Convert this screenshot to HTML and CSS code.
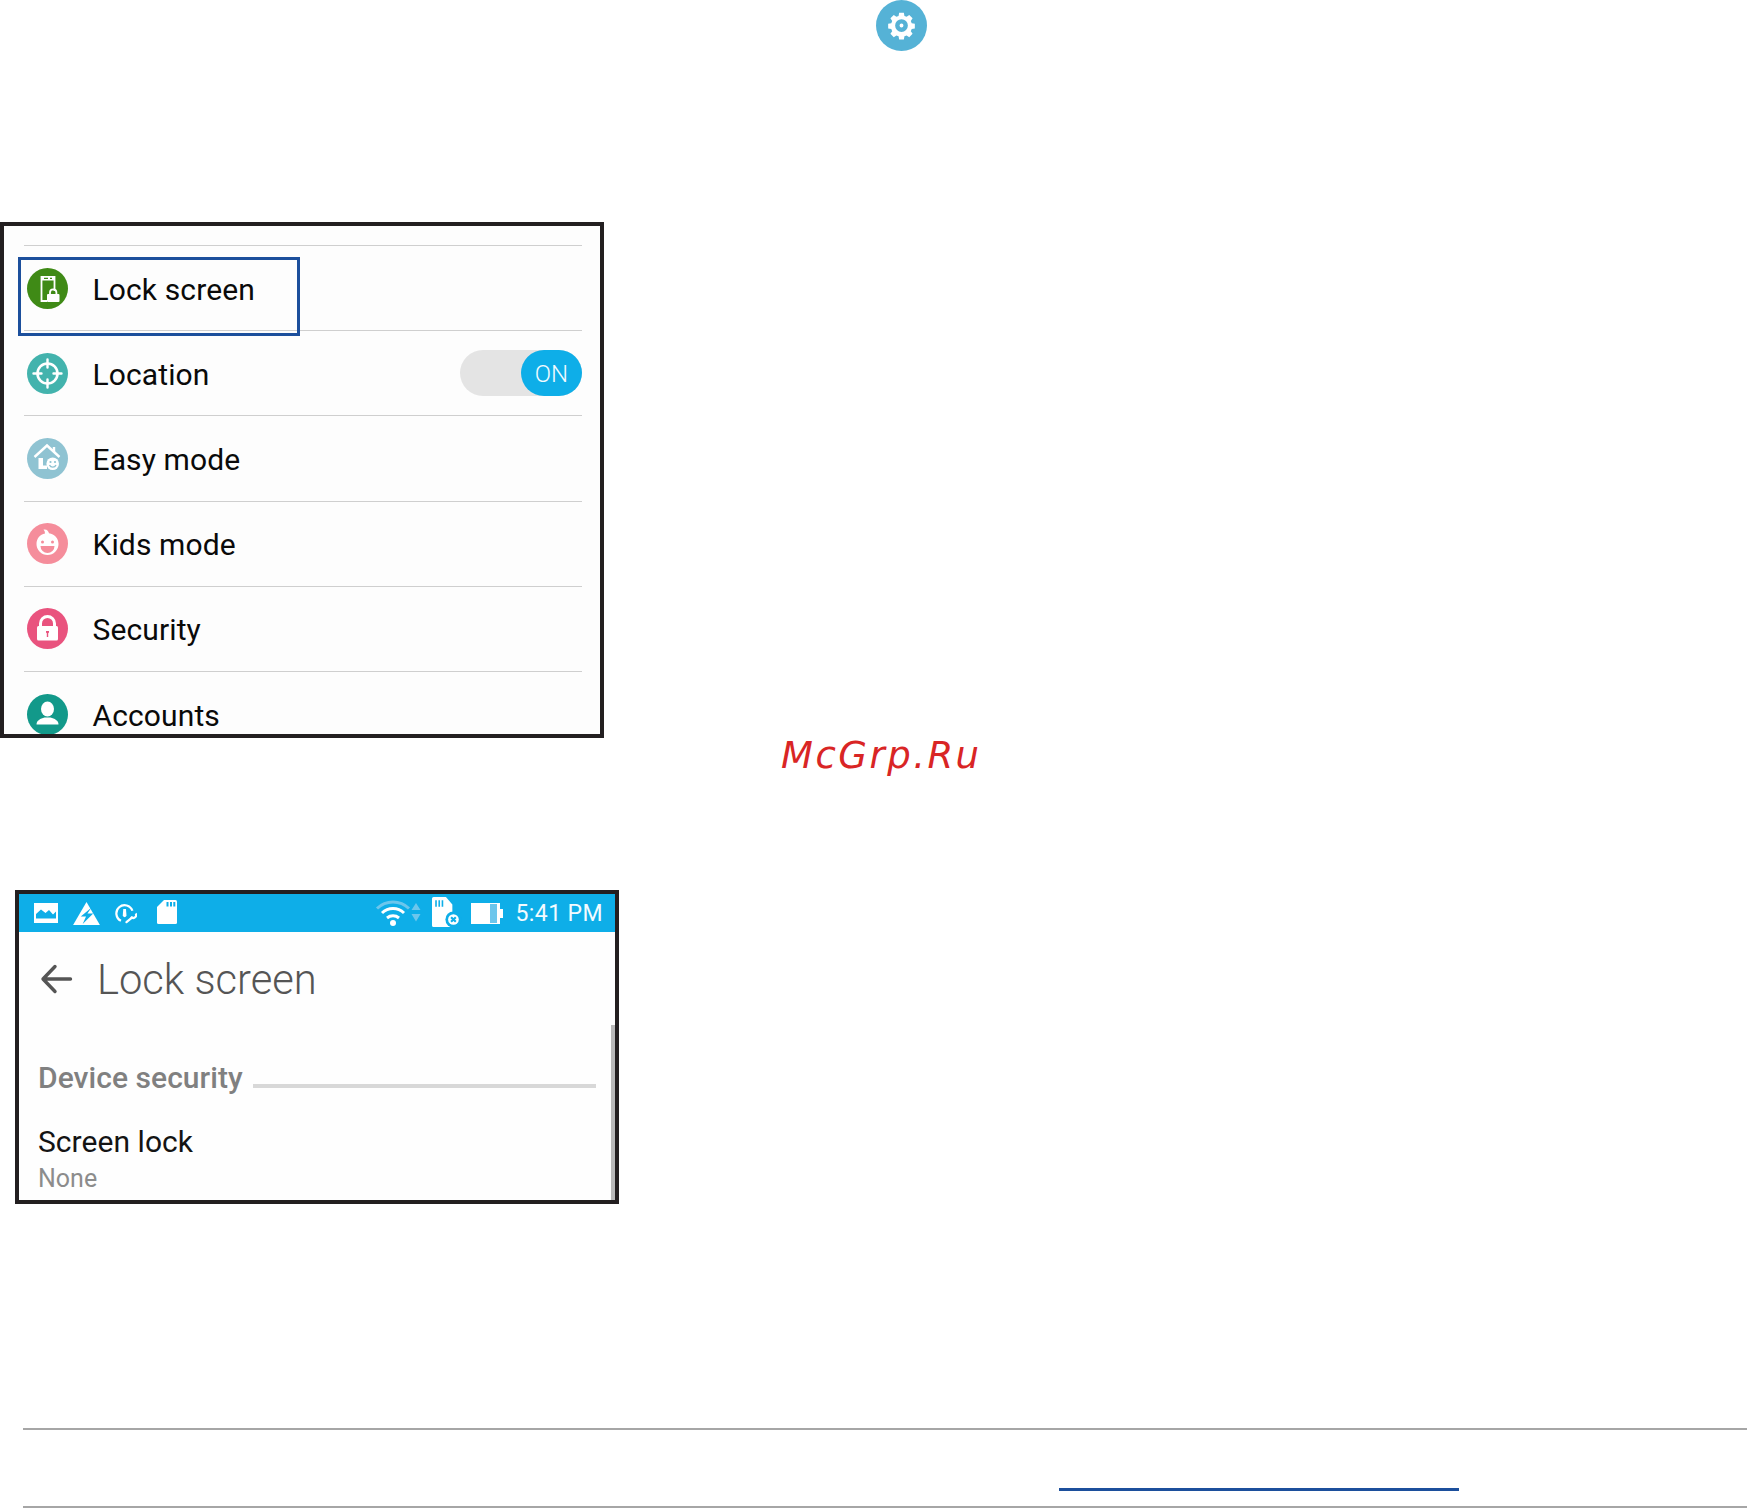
FILE: index.html
```html
<!DOCTYPE html>
<html lang="en">
<head>
<meta charset="utf-8">
<title>Lock screen settings</title>
<link rel="stylesheet" href="styles.css">
</head>
<body>
<main class="page">
  <div class="gear-wrap">
    <svg class="gear" viewBox="0 0 52 52"><circle cx="26" cy="26" r="26" fill="#55b2d6"/><path fill="#fff" fill-rule="evenodd" d="M23.6 13h4.8l.6 3.2 2.2.9 2.7-1.8 3.4 3.4-1.8 2.7.9 2.2 3.2.6v4.800l-3.2.6-.9 2.2 1.8 2.7-3.4 3.4-2.7-1.8-2.2.9-.6 3.2h-4.800l-.6-3.2-2.2-.9-2.7 1.8-3.4-3.4 1.8-2.7-.9-2.2-3.2-.6v-4.800l3.2-.6.9-2.2-1.8-2.7 3.4-3.4 2.7 1.8 2.2-.9zM26 19.500a6.500 6.500 0 1 0 0 13 6.500 6.500 0 0 0 0-13zM26 24a2 2 0 1 1 0 4 2 2 0 0 1 0-4z"/></svg>
  </div>

  <section class="shot shot-menu">
    <div class="highlight"></div>
    <div class="menu">
      <div class="row">
        <svg class="icon" viewBox="0 0 41 41"><circle cx="20.500" cy="20.500" r="20.500" fill="#3f8a16"/><path fill="none" stroke="#fff" stroke-width="1.800" d="M20 33H14.500V9h13v14"/><path fill="#fff" d="M14 8.500h14v4H14z"/><path fill="#3f8a16" d="M17 9.800h4v1.200h-4zM23 9.800h2v1.200h-2z"/><path fill="none" stroke="#fff" stroke-width="1.800" d="M23 26.500v-2a3.200 3.200 0 0 1 6.400 0v2"/><rect x="20" y="26" width="12.500" height="8" rx="1" fill="#fff"/></svg>
        <span class="label">Lock screen</span>
      </div>
      <div class="row">
        <svg class="icon" viewBox="0 0 41 41"><circle cx="20.500" cy="20.500" r="20.500" fill="#43b3ad"/><circle cx="20.500" cy="20.500" r="10" fill="none" stroke="#fff" stroke-width="2.600"/><path stroke="#fff" stroke-width="2.400" stroke-linecap="round" d="M20.500 6.500v8M20.500 26.500v8M6.500 20.500h8M26.500 20.500h8"/></svg>
        <span class="label">Location</span>
        <div class="toggle"><span class="knob">ON</span></div>
      </div>
      <div class="row">
        <svg class="icon" viewBox="0 0 41 41"><circle cx="20.500" cy="20.500" r="20.500" fill="#8fc3d2"/><path fill="none" stroke="#fff" stroke-width="2.400" d="M7.500 19 20 7.500 32.500 19"/><path fill="none" stroke="#fff" stroke-width="2.400" d="M27 9v5"/><path fill="#fff" d="M11.500 20h4.500v7.500h4V31h-8.500z"/><circle cx="25.700" cy="25.700" r="6.300" fill="#fff"/><circle cx="23.500" cy="24" r="1.100" fill="#8fc3d2"/><circle cx="28" cy="24" r="1.100" fill="#8fc3d2"/><path fill="none" stroke="#8fc3d2" stroke-width="1.300" d="M22.500 27a3.500 3.500 0 0 0 6.500 0"/></svg>
        <span class="label">Easy mode</span>
      </div>
      <div class="row">
        <svg class="icon" viewBox="0 0 41 41"><circle cx="20.500" cy="20.500" r="20.500" fill="#f58d9b"/><path fill="#fff" d="M17.500 6.500c3 0 4 2 4.500 3.800 5.500.8 9.500 5 9.500 10.700a11 11 0 0 1-22 0c0-5.500 3.500-9.800 8.500-10.600 0-1.400-.5-2.700-1.500-3.900z"/><circle cx="15.500" cy="19" r="1.500" fill="#f58d9b"/><circle cx="25.500" cy="19" r="1.500" fill="#f58d9b"/><path fill="#f58d9b" d="M13.500 23h14a7 7 0 0 1-14 0z"/></svg>
        <span class="label">Kids mode</span>
      </div>
      <div class="row">
        <svg class="icon" viewBox="0 0 41 41"><circle cx="20.500" cy="20.500" r="20.500" fill="#e9537e"/><path fill="none" stroke="#fff" stroke-width="3" d="M13.500 19v-3.500a7 7 0 0 1 14 0V19"/><rect x="10" y="18" width="21" height="14.500" rx="1.500" fill="#fff"/><path fill="#e9537e" d="M19 23h3v1.500l-.8.800V29h-1.400v-3.700l-.8-.800z"/></svg>
        <span class="label">Security</span>
      </div>
      <div class="row">
        <svg class="icon" viewBox="0 0 41 41"><circle cx="20.500" cy="20.500" r="20.500" fill="#12998a"/><ellipse cx="20.500" cy="15" rx="6.500" ry="7.500" fill="#fff"/><path fill="#fff" d="M9.500 30.500c0-4 4-6 8-7h6c4 1 8 3 8 7z"/></svg>
        <span class="label">Accounts</span>
      </div>
    </div>
  </section>

  <div class="watermark">McGrp.Ru</div>

  <section class="shot shot-lock">
    <div class="statusbar">
      <div class="tray">
        <svg class="si si-img" viewBox="0 0 24 20"><path fill="#fff" fill-rule="evenodd" d="M0 0h24v20H0zM2 15.500h20v-7l-3 3-4-4.500-3.500 3L7 6.500l-5 4.500z"/></svg>
        <svg class="si si-warn" viewBox="0 0 28 24"><path fill="#fff" d="M14 0l14 24H0z"/><path fill="#0eaee8" d="M19 6 8 15h5.500L10 23l11-11h-6z"/></svg>
        <svg class="si si-gauge" viewBox="0 0 24 22"><path fill="none" stroke="#fff" stroke-width="2.400" d="M6.500 19A9 9 0 1 1 19 8"/><path fill="#fff" d="M9 6h3l.5 7a2 2 0 0 1-4 0z"/><path fill="none" stroke="#fff" stroke-width="2.400" stroke-linecap="round" d="M12.500 20.500l6-5"/><path fill="none" stroke="#fff" stroke-width="2.400" d="M22.500 11a3 3 0 0 1-5 3.500"/></svg>
        <svg class="si si-sd" viewBox="0 0 20 24"><path fill="#fff" d="M7 0h11.500a1.500 1.500 0 0 1 1.500 1.500v21a1.500 1.500 0 0 1-1.500 1.500h-17A1.500 1.500 0 0 1 0 22.500V7z"/><path fill="#0eaee8" d="M9.500 2h2v4.500h-2zM13 2h2v4.500h-2zM16.300 2h2v4.500h-2z"/></svg>
      </div>
      <div class="tray tray-right">
        <svg class="si si-wifi" viewBox="0 0 46 28"><path fill="none" stroke="#6cc6ec" stroke-width="3" d="M2 10.500a23 23 0 0 1 32 0"/><path fill="none" stroke="#fff" stroke-width="3" d="M7 15a16 16 0 0 1 22 0M12 20a9.500 9.500 0 0 1 12 0"/><circle cx="18" cy="25" r="3" fill="#fff"/><path fill="#6cc6ec" d="M41 5l4.500 7h-9zM36.500 16h9L41 23.500z"/></svg>
        <svg class="si si-sdx" viewBox="0 0 28 28"><path fill="#fff" d="M1.500 0H13l6 7v9h-8v12H1.500A1.500 1.500 0 0 1 0 26.500v-25A1.500 1.500 0 0 1 1.500 0z"/><path fill="#0eaee8" d="M3 3h1.500v6H3zM6 3h1.500v6H6zM9 3h1.500v6H9z"/><path fill="#fff" d="M10 14h9v14h-9z"/><circle cx="20" cy="21" r="7.500" fill="#0eaee8"/><circle cx="20" cy="21" r="5" fill="#fff"/><path stroke="#0eaee8" stroke-width="2" d="M17.800 18.800l4.400 4.400M22.200 18.800l-4.400 4.400"/></svg>
        <svg class="si si-batt" viewBox="0 0 32 21"><path fill="#fff" d="M0 0h29v21H0zM29 6h3v9h-3z"/><path fill="#6cc6ec" d="M19 1h7v19h-7z"/></svg>
        <span class="time">5:41 PM</span>
      </div>
    </div>
    <div class="titlebar">
      <svg class="back" viewBox="0 0 32 30"><path fill="none" stroke="#555" stroke-width="3.400" stroke-linecap="round" stroke-linejoin="round" d="M30 15H3M14.500 2.500 2.500 15l12 12.500"/></svg>
      <span class="title">Lock screen</span>
    </div>
    <div class="group">
      <span class="group-name">Device security</span>
      <span class="group-line"></span>
    </div>
    <div class="pref-name">Screen lock</div>
    <div class="pref-value">None</div>
    <div class="scrollbar"></div>
  </section>

  <footer class="foot">
    <div class="foot-top"></div>
    <div class="foot-link"></div>
    <div class="foot-bottom"></div>
  </footer>
</main>
</body>
</html>
```

FILE: styles.css
```css
* { box-sizing: border-box; }
html, body { margin: 0; padding: 0; background: #fff; }
body { width: 1747px; height: 1508px; overflow: hidden; font-family: Roboto, "Liberation Sans", sans-serif; }
.page { display: flex; flex-direction: column; height: 1508px; }

.gear-wrap { height: 222px; padding-left: 876px; }
.gear { display: block; width: 51px; height: 51px; }

.shot { position: relative; background: #fdfdfd; border: 4px solid #231f20; overflow: hidden; }
.shot-menu { width: 604px; height: 516px; padding: 19px 18px 0 20px; }

.highlight { position: absolute; left: 14px; top: 31px; width: 282px; height: 79px; border: 3px solid #1c4f9c; z-index: 1; }

.row { display: flex; align-items: center; height: 85.2px; border-top: 1.5px solid #cfcfcf; padding-left: 3px; }
.icon { display: block; width: 41px; height: 41px; flex: none; margin-right: 25px; }
.label { font-size: 30px; color: #0a0a0a; flex: 1; letter-spacing: .12px; padding-top: 2px; margin-left: -.5px; }

.toggle { display: flex; justify-content: flex-end; width: 122px; height: 46px; border-radius: 23px; background: #e4e4e4; }
.knob { display: flex; align-items: center; justify-content: center; width: 61px; height: 46px; padding-top: 1px; border-radius: 23px; background: #0eaee8; color: #f2fbff; font-size: 24px; font-weight: 300; }

.watermark { margin: -9px 0 0 781px; height: 54px; line-height: 54px; font-family: "DejaVu Sans", sans-serif; font-style: oblique; font-size: 37px; letter-spacing: 2.5px; color: #d92525; }

.shot-lock { width: 604px; height: 314px; margin: 107px 0 0 15px; background: #fefefe; }
.statusbar { display: flex; justify-content: space-between; align-items: center; height: 38px; padding: 0 12px 0 15px; background: #0eaee8; }
.tray { display: flex; align-items: center; }
.si { display: block; flex: none; }
.si-img { width: 24px; height: 20px; margin-right: 15px; }
.si-warn { width: 27px; height: 23px; margin-right: 15px; }
.si-gauge { width: 22px; height: 21px; margin-right: 20px; }
.si-sd { width: 20px; height: 24px; margin-bottom: 2px; }
.si-wifi { width: 46px; height: 28px; margin: 0 11px 2px 0; }
.si-sdx { width: 30px; height: 30px; margin: 0 9px 3px 0; }
.si-batt { width: 32px; height: 21px; margin-right: 13px; }
.time { font-size: 23px; color: #f2fbff; line-height: 38px; letter-spacing: .4px; padding-top: 2px; }

.titlebar { display: flex; align-items: center; height: 94px; padding-left: 21px; }
.back { display: block; width: 33px; height: 30px; margin-right: 24px; }
.title { font-size: 41.700px; font-weight: 300; color: #555; padding-top: 1px; }

.group { display: flex; align-items: center; margin-top: 33px; height: 36px; padding-left: 19px; padding-right: 19px; }
.group-name { font-size: 30px; font-weight: 500; color: #808080; margin-right: 10px; white-space: nowrap; letter-spacing: .05px; }
.group-line { flex: 1; height: 4px; margin-top: 17px; background: #d8d8d8; }
.pref-name { margin: 29px 0 0 19px; font-size: 30px; line-height: 36px; color: #141414; letter-spacing: .05px; }
.pref-value { margin: 4px 0 0 19px; font-size: 25px; line-height: 30px; color: #8c8c8c; }
.scrollbar { position: absolute; right: 0; top: 131px; bottom: 0; width: 4px; background: #b9b9b9; }

.foot { flex: 1; margin-left: 23px; display: flex; flex-direction: column; margin-top: 224px; }
.foot-top { height: 2px; background: #a6a6a6; }
.foot-link { width: 400px; height: 3px; margin: 58px 0 0 1036px; background: #1c4f9c; }
.foot-bottom { height: 2px; margin-top: 15px; background: #a6a6a6; }
```
